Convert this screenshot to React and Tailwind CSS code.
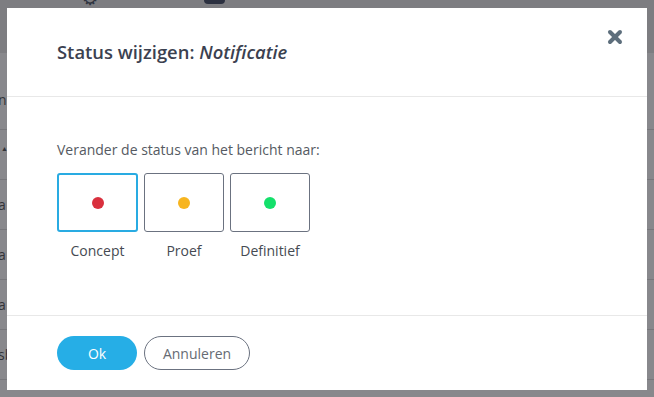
import { X } from "lucide-react";

const OPTIONS = [
  { label: "Concept", color: "bg-[#d9303e]", selected: true },
  { label: "Proef", color: "bg-[#f7b51f]" },
  { label: "Definitief", color: "bg-[#14e06b]" },
];

function Backdrop() {
  const rows = [
    { h: "h-[50px]", text: "▲", small: true },
    { h: "h-[50px]", text: "a" },
    { h: "h-[50px]", text: "a" },
    { h: "h-[50px]", text: "a" },
    { h: "h-[50px]", text: "sb" },
    { h: "h-[50px]", text: "" },
  ];
  return (
    <div className="flex h-[397px] w-[654px] flex-col overflow-hidden bg-[#88888c]">
      <div className="flex h-[53px] shrink-0 items-start bg-[#7d7d81]">
        <span className="ml-[82px] mt-[-11px] text-[18px] leading-[18px] text-[#2f3440]">⚙</span>
        <div className="ml-[106px] h-[4px] w-[21px] rounded-b-sm bg-[#2b3040]" />
      </div>
      <div className="h-[77px] shrink-0 border-b border-[#77777b] pt-[37px] text-[14px] leading-[20px] text-[#333338]">
        <span className="ml-[-2px]">n</span>
      </div>
      {rows.map((r, i) => (
        <div
          key={i}
          className={`${r.h} flex shrink-0 items-center border-b border-[#77777b] text-[14px] text-[#333338]`}
        >
          <span className={r.small ? "ml-[1px] mt-[-10px] text-[7px]" : "ml-[-2px]"}>{r.text}</span>
        </div>
      ))}
    </div>
  );
}

export default function App() {
  return (
    <div className="relative h-[397px] w-[654px] overflow-hidden font-['Open_Sans',sans-serif]">
      <Backdrop />
      <div className="absolute left-[7px] top-[8px] flex h-[382px] w-[640px] flex-col bg-white">
        <div className="relative flex h-[89px] shrink-0 items-center border-b border-[#e8e8e8] pl-[50px]">
          <h2 className="text-[18.4px] font-semibold text-[#3b4150]">
            Status wijzigen: <em className="font-semibold italic">Notificatie</em>
          </h2>
          <button type="button" className="absolute right-[22px] top-[19px] text-[#5d6e7c]">
            <X size={20} strokeWidth={4.8} />
          </button>
        </div>
        <div className="flex flex-1 flex-col pl-[50px] pt-[43px]">
          <p className="text-[14px] leading-[20px] text-[#555a62]">Verander de status van het bericht naar:</p>
          <div className="mt-[13px] flex gap-[6px]">
            {OPTIONS.map((o) => (
              <div key={o.label} className="flex flex-col items-center">
                <div
                  className={`flex h-[59px] items-center justify-center rounded-[3px] ${
                    o.selected ? "w-[81px] border-2 border-[#29abe2]" : "w-[80px] border border-[#6b7280]"
                  }`}
                >
                  <span className={`h-[12px] w-[12px] rounded-full ${o.color}`} />
                </div>
                <span className="mt-[9px] text-[14px] leading-[20px] text-[#454a52]">{o.label}</span>
              </div>
            ))}
          </div>
        </div>
        <div className="flex h-[75px] shrink-0 items-center gap-[7px] border-t border-[#e8e8e8] pl-[50px]">
          <button
            type="button"
            className="h-[34px] w-[80px] rounded-full bg-[#26aee6] text-[14px] text-white"
          >
            Ok
          </button>
          <button
            type="button"
            className="h-[34px] w-[106px] rounded-full border border-[#6b7280] text-[14px] text-[#666b73]"
          >
            Annuleren
          </button>
        </div>
      </div>
    </div>
  );
}
